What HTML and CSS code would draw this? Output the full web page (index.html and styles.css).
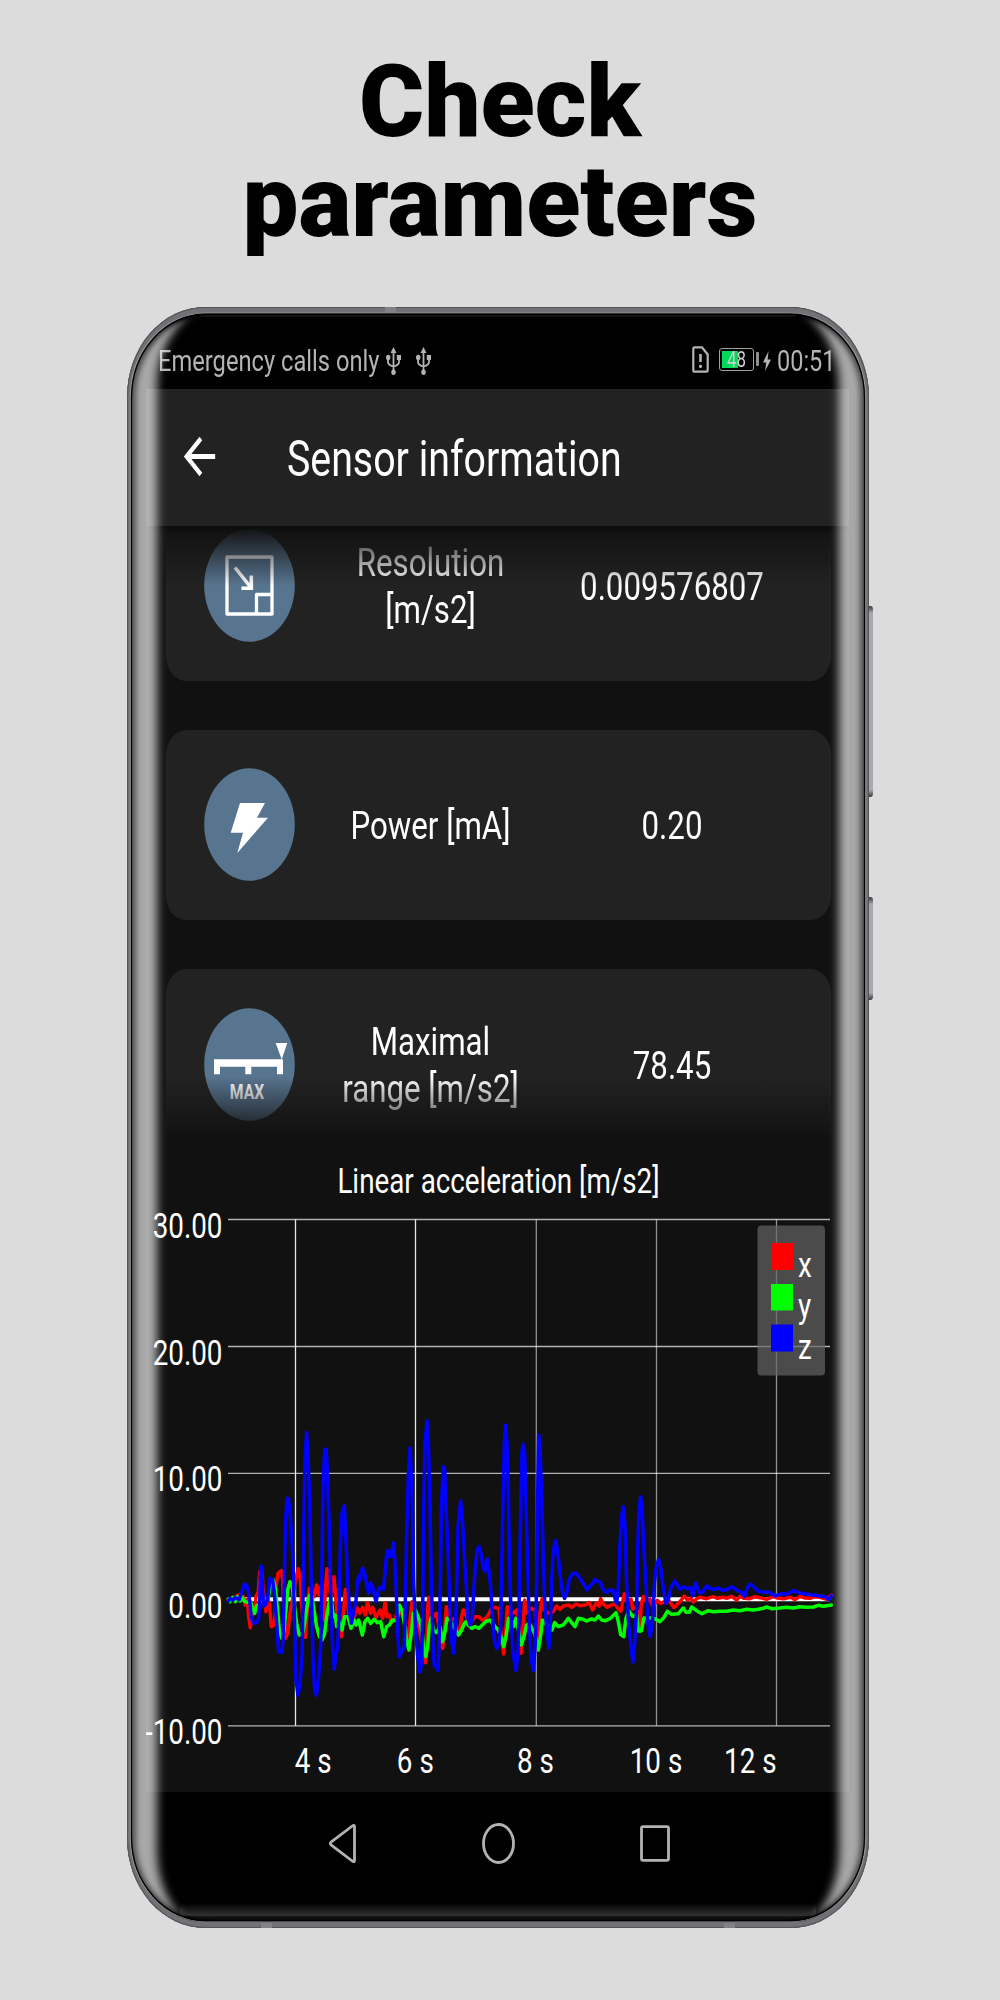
FILE: index.html
```html
<!DOCTYPE html>
<html lang="en">
<head>
<meta charset="utf-8">
<title>Check parameters</title>
<link rel="stylesheet" href="styles.css">
</head>
<body>
<h1 class="headline">Check<br>parameters</h1>
<div class="device">
  <div class="phone">
    <div class="screen">
      <div class="statusbar">
        <span class="tall carrier">Emergency calls only</span>
        <svg class="usb" viewBox="0 0 15 28"><g fill="none" stroke="#b4b4b4" stroke-width="1.8"><path d="M7.5 4V25M2 11V15Q2 18 7.5 19.500M13 11V15Q13 18 7.500 19.500"/></g><g fill="#b4b4b4"><path d="M7.500 0L10.500 6H4.500Z"/><ellipse cx="2.200" cy="10.500" rx="2.200" ry="2.700"/><rect x="10.800" y="8" width="4.200" height="5"/><ellipse cx="7.500" cy="25.300" rx="2.200" ry="2.700"/></g></svg>
        <svg class="usb second" viewBox="0 0 15 28"><g fill="none" stroke="#b4b4b4" stroke-width="1.8"><path d="M7.5 4V25M2 11V15Q2 18 7.5 19.500M13 11V15Q13 18 7.500 19.500"/></g><g fill="#b4b4b4"><path d="M7.500 0L10.500 6H4.500Z"/><ellipse cx="2.200" cy="10.500" rx="2.200" ry="2.700"/><rect x="10.800" y="8" width="4.200" height="5"/><ellipse cx="7.500" cy="25.300" rx="2.200" ry="2.700"/></g></svg>
        <svg class="sim" viewBox="0 0 17 27"><path d="M2.500 1.300H10L15.700 8.500V24Q15.700 25.700 14.500 25.700H2.500Q1.300 25.700 1.300 24V3Q1.300 1.300 2.500 1.300Z" fill="none" stroke="#b4b4b4" stroke-width="2.200"/><path d="M8.500 8V16" stroke="#b4b4b4" stroke-width="2.600"/><ellipse cx="8.500" cy="20.300" rx="1.500" ry="1.900" fill="#b4b4b4"/></svg>
        <div class="battery"><i class="charge"></i><span class="tall">48</span></div>
        <i class="nub"></i>
        <svg class="flash" viewBox="0 0 8 20"><path d="M5.600 0L0 11.500H3.200L2.200 20L8 8.500H4.600Z" fill="#b4b4b4"/></svg>
        <span class="tall clock">00:51</span>
      </div>
      <div class="appbar">
        <svg class="back" viewBox="0 0 24 24" preserveAspectRatio="none"><path fill="#fff" d="M20 11H7.830l5.590-5.590L12 4l-8 8 8 8 1.410-1.410L7.830 13H20v-2z"/></svg>
        <span class="tall title">Sensor information</span>
      </div>
      <div class="list">
        <div class="card">
          <svg class="icon" viewBox="0 0 91 113"><ellipse cx="45.500" cy="56.500" rx="45.300" ry="56.300" fill="#587590"/><g fill="none" stroke="#fff" stroke-width="3.300" stroke-linejoin="round"><rect x="23" y="28" width="45" height="57"/><path d="M68 65.500H52.500V85"/></g><path d="M31 38.500L46.500 58M37.500 59.200H47.300V46.500" fill="none" stroke="#fff" stroke-width="3.600"/></svg>
          <span class="tall">Resolution<br>[m/s2]</span>
          <span class="tall">0.009576807</span>
        </div>
        <div class="card">
          <svg class="icon" viewBox="0 0 91 113"><ellipse cx="45.500" cy="56.500" rx="45.300" ry="56.300" fill="#587590"/><path fill="#fff" d="M36 35H61L53 49.700H64L33.300 85L39 64.700H26.700Z"/></svg>
          <span class="tall">Power [mA]</span>
          <span class="tall">0.20</span>
        </div>
        <div class="card">
          <svg class="icon" viewBox="0 0 91 113"><ellipse cx="45.500" cy="56.500" rx="45.300" ry="56.300" fill="#587590"/><path fill="#fff" d="M10 51.300H79V66.300H73V58.700H47.300V66.300H41.300V58.700H16V66.300H10ZM71.700 35H83.300L77.700 51.500Z"/><text class="max" transform="translate(43 91) scale(1 1.250)">MAX</text></svg>
          <span class="tall">Maximal<br>range [m/s2]</span>
          <span class="tall">78.45</span>
        </div>
      </div>
      <svg class="chart" viewBox="146 1140 703 652">
        <g stroke="#fff" stroke-opacity=".68" stroke-width="1.300">
          <path d="M228 1219.500H830M228 1346.500H830M228 1473.300H830M228 1725.800H830"/>
          <path stroke-opacity=".9" d="M295.500 1219.500V1725.800M415.500 1219.500V1725.800"/>
          <path stroke-opacity=".55" d="M536.300 1219.500V1725.800M656.500 1219.500V1725.800M776.500 1219.500V1725.800"/>
        </g>
        <path d="M228 1599.300H830" stroke="#fff" stroke-width="4"/>
        <g transform="translate(220 1400) scale(.33333)" fill="none" stroke-width="10.500" stroke-linejoin="round" stroke-linecap="round">
          <polyline stroke="#f00" points="25,600 60,583 70,590 76,615 82,598 86,650 91,683 96,640 104,628 108,590 115,575 119,515 126,520 130,580 138,635 145,600 149,620 154,680 162,675 166,640 168,560 174,520 184,512 188,540 191,610 196,715 203,700 210,640 217,600 226,540 235,506 241,540 244,600 250,680 256,712 261,640 268,565 276,572 283,590 290,555 297,585 303,560 308,620 312,660 316,570 321,506 327,560 333,590 342,530 347,590 352,650 358,690 365,710 370,640 376,568 381,590 386,640 400,660 410,622 420,640 428,622 436,645 442,608 452,640 458,622 468,652 480,630 488,655 495,608 501,650 508,645 515,668 526,655 537,618 545,640 553,660 560,700 566,710 572,640 576,605 582,630 590,680 597,660 600,700 608,740 616,788 620,760 623,620 627,592 632,640 640,650 650,640 658,690 668,745 674,690 679,620 686,645 695,660 704,655 712,700 718,700 725,650 730,630 740,650 750,670 765,650 775,650 787,660 797,655 805,645 815,625 825,622 837,625 843,700 851,762 857,700 862,620 868,640 880,640 890,630 898,690 903,760 908,700 914,600 920,640 935,625 946,630 950,740 955,750 960,640 966,596 972,630 985,640 1000,635 1010,618 1020,628 1030,618 1045,615 1055,622 1068,612 1080,617 1095,615 1108,608 1118,630 1128,610 1137,618 1142,596 1150,612 1162,622 1172,616 1185,612 1195,627 1203,634 1208,604 1213,582 1220,604 1233,597 1238,627 1245,621 1252,632 1260,676 1264,610 1270,590 1278,604 1290,597 1298,619 1312,601 1322,610 1335,604 1348,604 1362,623 1375,610 1384,600 1393,588 1402,600 1412,594 1420,606 1430,596 1440,592 1460,596 1480,590 1492,595 1510,592 1520,595 1535,589 1550,600 1560,589 1572,595 1590,596 1605,590 1620,593 1640,598 1660,590 1672,594 1690,596 1712,592 1725,599 1740,589 1755,594 1770,595 1785,590 1800,592 1820,598 1834,585"/>
          <polyline stroke="#0f0" points="25,597 30,605 38,592 46,605 52,590 60,603 66,592 75,605 86,608 92,605 98,625 104,640 110,618 118,612 126,590 134,610 145,595 152,545 160,540 165,560 172,620 178,690 185,715 192,690 197,640 203,570 210,545 217,560 222,610 230,670 238,705 246,705 252,680 258,640 264,600 270,585 276,590 282,630 290,680 298,710 306,720 314,700 320,650 327,610 333,590 340,650 346,645 350,680 356,660 366,690 374,650 384,650 393,685 403,660 408,675 416,660 427,705 435,665 443,655 452,670 462,658 472,668 482,665 491,710 500,680 508,675 518,660 526,662 532,655 538,615 546,630 553,670 560,720 567,750 574,700 580,640 586,630 594,650 600,665 607,700 611,745 617,770 623,740 628,680 634,650 640,690 650,698 660,680 668,725 676,690 681,655 690,660 698,680 707,690 716,705 725,690 733,670 738,665 745,675 755,685 765,680 777,685 787,675 797,665 810,660 825,680 835,690 843,710 851,740 858,710 866,655 874,660 881,680 888,655 895,690 904,735 912,710 920,675 928,670 938,690 944,700 955,750 963,700 967,660 975,670 985,680 996,690 1004,668 1015,680 1030,675 1045,655 1055,668 1065,680 1075,655 1090,658 1100,663 1115,657 1125,660 1135,648 1145,660 1157,662 1170,656 1188,638 1195,665 1202,704 1211,710 1218,654 1226,632 1238,649 1250,645 1255,693 1264,693 1272,654 1290,654 1305,656 1320,665 1332,652 1342,634 1355,643 1375,641 1390,624 1398,637 1408,637 1415,621 1430,632 1446,641 1465,632 1480,635 1500,634 1520,634 1540,630 1560,632 1580,628 1600,630 1615,628 1630,625 1640,621 1655,626 1680,624 1700,622 1720,624 1740,620 1760,622 1780,621 1795,616 1810,619 1834,615"/>
          <polyline stroke="#00f" points="25,603 30,595 38,601 45,592 52,596 57,600 62,585 67,572 73,553 80,555 86,578 90,610 93,650 98,665 103,670 110,668 116,655 119,610 122,498 125,500 128,580 132,618 138,612 143,596 150,535 158,540 163,580 168,640 172,700 176,755 186,757 189,720 192,600 196,380 201,295 206,298 212,360 219,480 224,680 228,840 234,886 240,850 246,770 249,600 251,420 255,170 260,97 264,170 269,300 274,560 279,780 284,870 289,886 296,830 302,740 306,500 309,260 314,148 319,148 323,240 329,420 333,620 338,745 343,808 347,765 353,745 357,640 361,440 366,340 373,317 377,400 383,540 389,640 394,670 400,640 408,600 412,550 416,528 421,540 424,515 428,504 434,520 440,555 446,580 451,548 458,560 463,585 468,605 474,578 480,562 490,568 496,510 501,452 506,470 510,452 515,470 520,428 524,470 528,550 533,700 538,770 545,755 553,742 556,600 560,400 565,230 570,143 575,240 577,310 581,540 586,680 593,770 600,816 605,790 608,640 611,340 615,130 621,62 625,120 629,270 634,540 639,730 643,798 649,795 654,812 658,700 662,500 664,320 670,200 674,210 678,320 684,450 689,590 694,720 701,760 706,680 710,570 714,380 722,303 728,370 734,480 740,580 744,655 750,675 757,655 761,580 766,500 771,452 777,440 783,460 789,500 795,515 798,485 802,477 806,505 812,560 817,640 823,720 830,746 837,730 842,675 845,510 849,310 853,130 857,75 861,130 865,270 868,460 873,640 879,760 888,811 894,760 897,640 899,500 903,290 906,155 909,133 914,160 918,310 923,500 928,680 934,780 940,811 946,730 950,540 953,290 956,105 960,140 965,290 970,480 974,600 979,675 987,744 992,640 995,540 1000,450 1007,422 1014,460 1020,520 1027,575 1034,595 1041,575 1048,538 1058,520 1068,520 1077,530 1086,545 1093,555 1101,570 1110,558 1117,552 1125,538 1133,544 1141,547 1147,565 1159,578 1170,570 1180,572 1186,600 1190,610 1195,565 1200,432 1206,343 1210,321 1215,377 1220,554 1226,676 1232,732 1239,786 1244,732 1250,621 1253,455 1257,332 1262,290 1267,343 1272,455 1279,565 1283,665 1291,710 1298,654 1304,543 1309,499 1316,478 1323,510 1330,565 1338,610 1345,599 1353,563 1364,543 1372,554 1380,568 1390,560 1402,566 1412,563 1418,588 1426,549 1432,563 1440,579 1448,577 1458,560 1463,558 1470,566 1485,568 1495,564 1505,570 1515,571 1525,566 1535,560 1545,567 1555,573 1565,577 1573,590 1582,563 1592,552 1602,562 1615,574 1630,576 1650,577 1665,588 1672,585 1685,581 1700,583 1712,576 1722,572 1740,579 1760,583 1780,585 1800,588 1815,590 1826,599 1834,587"/>
        </g>
        <rect x="757.500" y="1225.500" width="67.500" height="150" rx="4" fill="#646464" fill-opacity=".7"/>
        <path fill="#f00" d="M771 1243h22v27h-22z"/>
        <path fill="#0f0" d="M771 1284h22v26.500h-22z"/>
        <path fill="#00f" d="M771 1324.500h22v27h-22z"/>
        <g class="labels">
          <text transform="translate(498.500 1193.300) scale(1 1.230)" text-anchor="middle">Linear acceleration [m/s2]</text>
          <g text-anchor="end">
            <text transform="translate(222.500 1237.700) scale(1 1.230)">30.00</text>
            <text transform="translate(222.500 1364.500) scale(1 1.230)">20.00</text>
            <text transform="translate(222.500 1491.300) scale(1 1.230)">10.00</text>
            <text transform="translate(222.500 1617.600) scale(1 1.230)">0.00</text>
            <text transform="translate(222.500 1744) scale(1 1.230)">-10.00</text>
          </g>
          <text transform="translate(294.800 1772.700) scale(1 1.230)">4 s</text>
          <g text-anchor="middle">
            <text transform="translate(415.300 1772.700) scale(1 1.230)">6 s</text>
            <text transform="translate(535.500 1772.700) scale(1 1.230)">8 s</text>
            <text transform="translate(656 1772.700) scale(1 1.230)">10 s</text>
          </g>
          <text text-anchor="end" transform="translate(776.500 1772.700) scale(1 1.230)">12 s</text>
          <text transform="translate(798 1277) scale(1 1.230)">x</text>
          <text transform="translate(798 1318) scale(1 1.230)">y</text>
          <text transform="translate(798 1358.800) scale(1 1.230)">z</text>
        </g>
      </svg>
      <div class="navbar">
        <svg width="28" height="41"><path d="M25 2.500L3 19.200Q1.500 20.500 3 21.800L25 38.500Q26.500 39 26.500 37.500V3.500Q26.500 2 25 2.500Z"/></svg>
        <svg width="33" height="41"><ellipse cx="16.500" cy="20.500" rx="15" ry="19"/></svg>
        <svg width="30" height="41"><rect x="1.500" y="3.700" width="27" height="33.600" rx="1.500"/></svg>
      </div>
    </div>
    <svg class="bezel" viewBox="127 307 742 1621">
      <defs>
        <filter id="soft" x="-5%" y="-5%" width="110%" height="110%"><feGaussianBlur stdDeviation="5"/></filter>
        <filter id="edge" x="-5%" y="-5%" width="110%" height="110%"><feGaussianBlur stdDeviation="3.500 1"/></filter>
        <clipPath id="glass"><rect x="131" y="314" width="734" height="1608" rx="74" ry="84"/></clipPath>
        <linearGradient id="chin" x1="0" y1="0" x2="0" y2="1"><stop offset="0" stop-color="#fff" stop-opacity="0"/><stop offset="1" stop-color="#fff" stop-opacity=".2"/></linearGradient>
      </defs>
      <g clip-path="url(#glass)">
        <path filter="url(#soft)" fill="#fff" fill-opacity=".66" fill-rule="evenodd" d="M100 280H896V1955H100ZM157 385Q157 335 205 300V270H791V300Q839 335 839 385V1850Q839 1902 798 1935V1965H198V1935Q157 1902 157 1850Z"/>
        <rect x="180" y="1903" width="636" height="13" fill="url(#chin)"/>
        <rect x="180" y="1916" width="636" height="6" fill="#151515"/>
        <rect x="200" y="314" width="596" height="2.500" fill="#4a4a4a"/>
        <rect filter="url(#edge)" x="131" y="314" width="734" height="1608" rx="74" ry="84" fill="none" stroke="#000" stroke-opacity=".75" stroke-width="7"/>
      </g>
      <g fill="none">
        <rect x="129" y="310.500" width="738" height="1614.500" rx="76" ry="86" stroke="#717176" stroke-width="4"/>
        <rect x="128" y="310" width="740" height="1615" rx="77" ry="87" stroke="#717176" stroke-width="6"/>
        <rect x="130.300" y="313" width="735.400" height="1608.500" rx="75" ry="85" stroke="#939396" stroke-width="1.200"/>
        <rect x="131.500" y="314.300" width="733" height="1606.500" rx="74" ry="84" stroke="#000" stroke-width="1.300"/>
        <rect x="127.500" y="307.500" width="741" height="1620" rx="78" ry="90" stroke="#555559"/>
      </g>
      <path fill="#828286" d="M385 307h11v6h-11zM261 1923h11v5h-11zM724 1923h11v5h-11z"/>
    </svg>
  </div>
  <div class="keys"><i class="key volume"></i><i class="key power"></i></div>
</div>
</body>
</html>
```
FILE: styles.css
```css
body {
  margin: 0;
  width: 1000px;
  height: 2000px;
  overflow: hidden;
  background: #dcdcdc;
  font-family: Roboto, "Liberation Sans", sans-serif;
}
.headline {
  margin: 0;
  padding-top: 52px;
  height: 307px;
  box-sizing: border-box;
  text-align: center;
  font-size: 99.500px;
  font-weight: 900;
  line-height: 100px;
  color: #000;
}
.device {
  display: flex;
  padding-left: 127px;
}
.phone {
  position: relative;
  width: 742px;
  height: 1621px;
  box-sizing: border-box;
  padding: 0 20px 0 19px;
  overflow: hidden;
  border-radius: 78px / 90px;
  background: #000;
}
.screen {
  width: 703px;
  color: #fff;
}
.tall {
  display: block;
  transform: scaleY(1.25);
  white-space: nowrap;
}
.statusbar {
  display: flex;
  align-items: center;
  box-sizing: border-box;
  height: 82px;
  padding: 25px 0 0 12px;
  color: #b4b4b4;
  font-size: 23.700px;
}
.carrier {
  width: 228px;
}
.usb {
  width: 15px;
  height: 28px;
}
.second {
  margin-left: 15px;
}
.sim {
  width: 17px;
  height: 27px;
  margin: -3px 10px 0 261px;
}
.battery {
  display: flex;
  position: relative;
  align-items: center;
  justify-content: center;
  box-sizing: border-box;
  width: 35px;
  height: 23px;
  border: 1.500px solid #a0a0a0;
  border-radius: 3px;
  font-size: 17px;
  margin-top: -3px;
}
.charge {
  position: absolute;
  left: 1.500px;
  top: 2px;
  width: 16px;
  height: 17px;
  background: #00d95a;
}
.battery .tall {
  position: relative;
  color: #ccc;
}
.nub {
  width: 3px;
  height: 14px;
  margin: -3px 4px 0 2px;
  border-radius: 1px;
  background: #909090;
}
.flash {
  width: 8px;
  height: 20px;
  margin-right: 6px;
}
.clock {
  font-size: 23.500px;
}
.appbar {
  display: flex;
  align-items: center;
  height: 137px;
  background: #222;
}
.back {
  width: 47px;
  height: 59px;
  margin: -2px 0 0 30px;
}
.title {
  margin: 5px 0 0 64px;
  font-size: 39.300px;
}
.list {
  position: relative;
  display: flex;
  flex-direction: column;
  gap: 49px;
  box-sizing: border-box;
  height: 614px;
  padding: 0 18px 0 20px;
  overflow: hidden;
  background: #111;
}
.list::before,
.list::after {
  content: "";
  position: absolute;
  left: 0;
  right: 0;
  z-index: 1;
}
.list::before {
  top: 0;
  height: 60px;
  background: linear-gradient(#0c0c0c, #111d 14%, #1110);
}
.list::after {
  bottom: 0;
  height: 64px;
  background: linear-gradient(#1110, #111);
}
.card {
  display: grid;
  grid-template-columns: 91px 271px 212px;
  align-items: center;
  flex: none;
  box-sizing: border-box;
  height: 190.500px;
  padding-left: 38px;
  border-radius: 20px / 25px;
  background: #222;
  text-align: center;
  font-size: 31.250px;
}
.card:first-child {
  margin-top: -36px;
}
.card .tall {
  padding-top: 2px;
}
.icon {
  width: 91px;
  height: 113px;
}
.max {
  fill: #fff;
  font-size: 15.700px;
  font-weight: 700;
  text-anchor: middle;
}
.chart {
  display: block;
  width: 703px;
  height: 652px;
  background: #111;
}
.labels {
  fill: #fff;
  font-size: 27.800px;
}
.navbar {
  display: flex;
  align-items: center;
  gap: 125.500px;
  height: 103px;
  padding-left: 182px;
}
.navbar svg {
  fill: none;
  stroke: #b2b2b2;
  stroke-width: 2.800px;
}
.bezel {
  position: absolute;
  inset: 0;
  z-index: 2;
  width: 742px;
  height: 1621px;
}
.keys {
  display: flex;
  flex-direction: column;
  gap: 100px;
  padding-top: 299px;
}
.key {
  width: 4px;
  border-radius: 0 3px 3px 0;
  background: linear-gradient(#333, #a9a8af 7px, #a9a8af calc(100% - 7px), #333);
}
.volume {
  height: 191px;
}
.power {
  height: 103px;
}
```
